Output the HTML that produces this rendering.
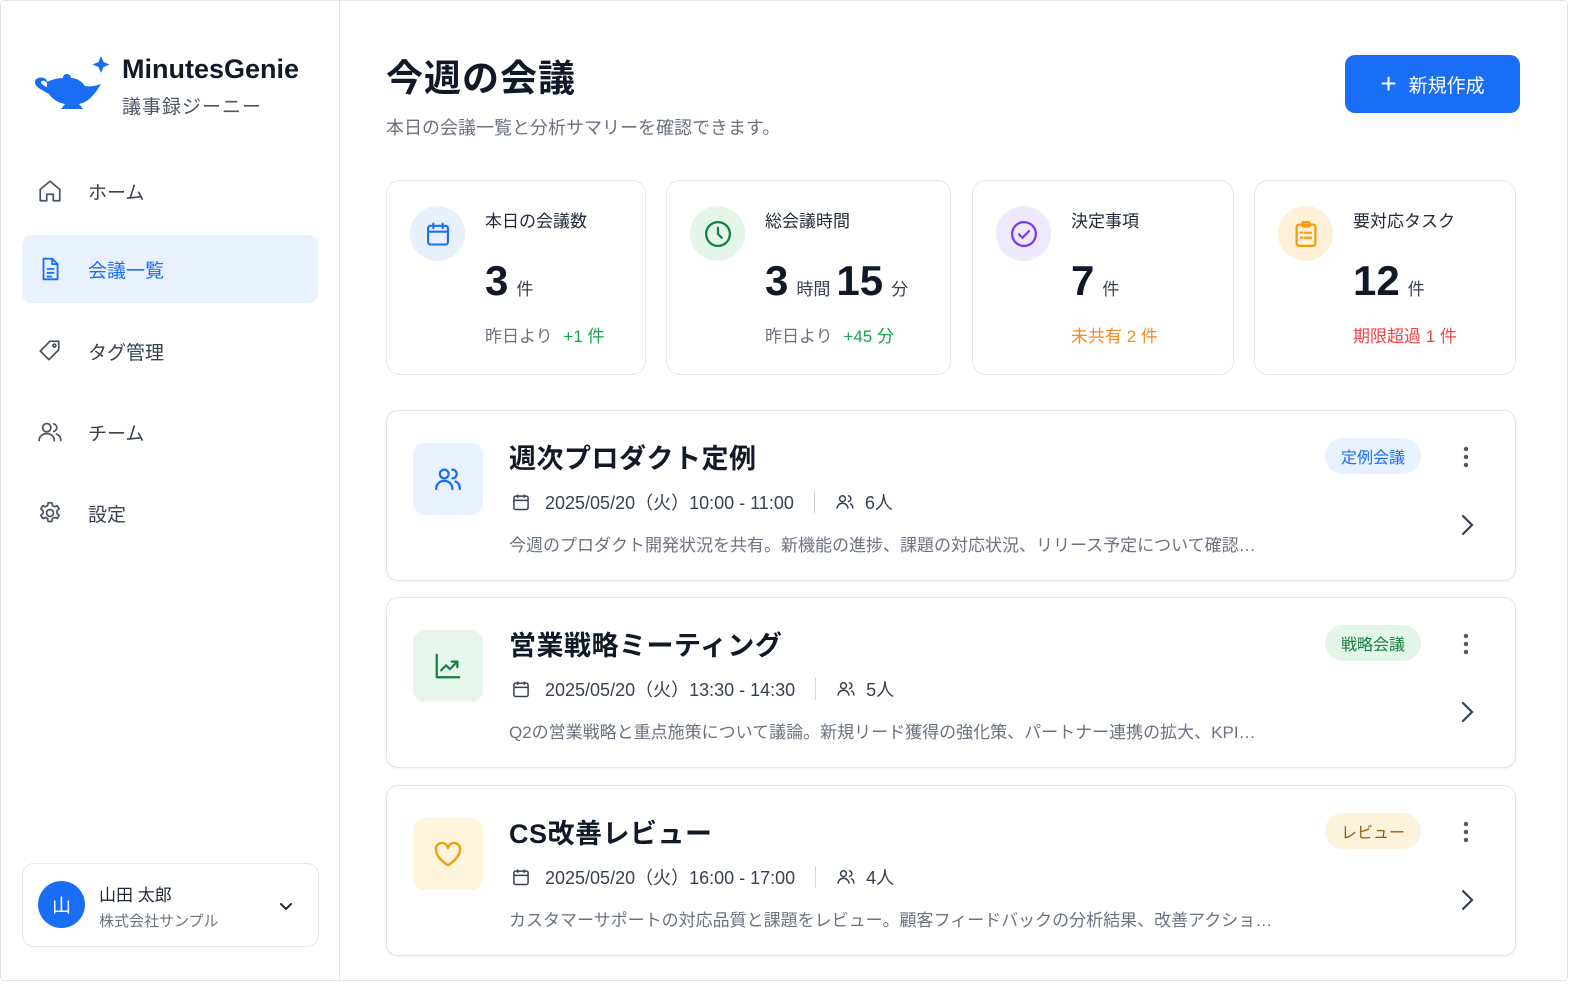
<!DOCTYPE html>
<html><head><meta charset="utf-8"><style>
*{box-sizing:border-box;margin:0;padding:0}
body{width:1586px;height:992px;background:#fff;font-family:"Liberation Sans","Noto Sans CJK JP",sans-serif;color:#1f2937;position:relative;overflow:hidden}
.frame{position:absolute;left:0;top:0;width:1568px;height:981px;border:1px solid #e3e5ea;border-radius:4px}
.side{position:absolute;left:0;top:0;width:340px;height:981px;border-right:1px solid #e5e7eb}
.abs{position:absolute}
.nav{position:absolute;left:22px;width:296px;height:68px;border-radius:10px;display:flex;align-items:center;font-size:19px;color:#374151}
.nav svg{position:absolute;left:15px}
.nav span{position:absolute;left:66px}
.card{position:absolute;top:180px;height:195px;border:1px solid #e5e7eb;border-radius:14px;background:#fff}
.ic{position:absolute;left:23px;top:25px;width:55px;height:55px;border-radius:50%;display:flex;align-items:center;justify-content:center}
.lab{position:absolute;left:98px;top:26px;font-size:17px;color:#1f2937}
.num{position:absolute;left:98px;top:76px;font-size:42px;font-weight:bold;color:#111827;white-space:nowrap}
.num small{font-size:17px;font-weight:normal;margin:0 6px 0 8px;color:#374151}
.sub{position:absolute;left:98px;top:141px;font-size:17px;color:#6b7280}
.item{position:absolute;left:386px;width:1130px;height:171px;border:1px solid #e2e4e9;border-radius:12px;box-shadow:0 1px 3px rgba(0,0,0,.06);background:#fff}
.sq{position:absolute;left:26px;top:32px;width:70px;height:72px;border-radius:12px;display:flex;align-items:center;justify-content:center}
.t{position:absolute;left:122px;top:26px;font-size:27px;font-weight:bold;color:#111827;letter-spacing:.5px}
.meta{position:absolute;left:124px;top:78px;font-size:18px;color:#374151;display:flex;align-items:center;white-space:nowrap}
.desc{position:absolute;left:122px;top:120px;font-size:17px;color:#6b7280;white-space:nowrap}
.tag{position:absolute;right:94px;top:27px;height:36px;padding:0 16px;border-radius:18px;font-size:16px;display:flex;align-items:center}
.dots{position:absolute;right:46px;top:35px}
.chev{position:absolute;right:40px;top:102px}
</style></head><body>
<div class="frame"></div>
<div class="side">
  <svg class="abs" style="left:33px;top:54px" width="78" height="58" viewBox="0 0 78 58">
    <path d="M68 2 l2.5 6 6 2.5 -6 2.5 -2.5 6 -2.5 -6 -6 -2.5 6 -2.5z" fill="#1a6ef5"/>
    <path d="M14 28 c0-6 -12-6 -12 0 c0 6 8 8 14 12 c4 6 10 9 16 10 l-4 5 h22 l-4 -5 c10 -2 16 -10 22 -20 c-6 2 -12 3 -16 2 c-4 -6 -10 -8 -14 -8 c0 -3 -3 -4 -4 -4 c-2 0 -4 1 -4 4 c-6 0 -12 2 -16 4 z M8 28 c1 -2 4 -2 6 1 l0 4 c-3 -1 -6 -3 -6 -5z" fill="#1a6ef5"/>
  </svg>
  <div class="abs" style="left:122px;top:54px;font-size:27px;font-weight:bold;color:#111827">MinutesGenie</div>
  <div class="abs" style="left:122px;top:92px;font-size:19px;color:#4b5563;letter-spacing:1px">議事録ジーニー</div>

  <div class="nav" style="top:157px"><svg width="26" height="26" viewBox="0 0 24 24" fill="none" stroke="#4b5563" stroke-width="1.6" stroke-linejoin="round"><path d="M3 10.5 12 3l9 7.5V21h-6v-6h-6v6H3z"/></svg><span>ホーム</span></div>
  <div class="nav" style="top:235px;background:#e9f1ff;color:#1a6ef5"><svg width="26" height="26" viewBox="0 0 24 24" fill="none" stroke="#1a6ef5" stroke-width="1.7" stroke-linejoin="round"><path d="M6 2.5h8l5 5V21.5H6z M14 2.5v5h5 M9 12h7 M9 15.5h7 M9 19h5"/></svg><span>会議一覧</span></div>
  <div class="nav" style="top:317px"><svg width="26" height="26" viewBox="0 0 24 24" fill="none" stroke="#4b5563" stroke-width="1.6" stroke-linejoin="round"><path d="M3 12 12 3h8v8l-9 9z"/><circle cx="16" cy="7" r="1.3"/></svg><span>タグ管理</span></div>
  <div class="nav" style="top:398px"><svg width="26" height="26" viewBox="0 0 24 24" fill="none" stroke="#4b5563" stroke-width="1.6" stroke-linecap="round"><circle cx="9" cy="8" r="3.8"/><path d="M2 20c0-4 3-6.5 7-6.5s7 2.5 7 6.5M15.5 4.5a3.6 3.6 0 0 1 0 7M18 14c2.5.8 4 3 4 6"/></svg><span>チーム</span></div>
  <div class="nav" style="top:479px"><svg width="26" height="26" viewBox="0 0 24 24" fill="none" stroke="#4b5563" stroke-width="1.6" stroke-linejoin="round"><circle cx="12" cy="12" r="3.2"/><path d="M10.3 2.5h3.4l.5 2.6 2 1.1 2.5-.9 1.7 2.9-2 1.8v2.3l2 1.8-1.7 2.9-2.5-.9-2 1.1-.5 2.6h-3.4l-.5-2.6-2-1.1-2.5.9-1.7-2.9 2-1.8v-2.3l-2-1.8 1.7-2.9 2.5.9 2-1.1z"/></svg><span>設定</span></div>

  <div class="abs" style="left:22px;top:863px;width:297px;height:84px;border:1px solid #e5e7eb;border-radius:12px">
    <div class="abs" style="left:15px;top:17px;width:47px;height:47px;border-radius:50%;background:#1a6ef5;color:#fff;font-size:19px;display:flex;align-items:center;justify-content:center">山</div>
    <div class="abs" style="left:76px;top:17px;font-size:17px;color:#1f2937">山田 太郎</div>
    <div class="abs" style="left:76px;top:46px;font-size:15px;color:#6b7280">株式会社サンプル</div>
    <svg class="abs" style="left:255px;top:34px" width="16" height="16" viewBox="0 0 16 16" fill="none" stroke="#1f2937" stroke-width="2" stroke-linecap="round"><path d="M3 6l5 5 5-5"/></svg>
  </div>
</div>

<div class="abs" style="left:386px;top:48px;font-size:37px;font-weight:bold;color:#111827;letter-spacing:1px">今週の会議</div>
<div class="abs" style="left:386px;top:114px;font-size:18px;color:#6b7280">本日の会議一覧と分析サマリーを確認できます。</div>
<div class="abs" style="left:1345px;top:55px;width:175px;height:58px;border-radius:10px;background:#1a6ef5;color:#fff;font-size:19px;display:flex;align-items:center;justify-content:center"><span style="font-size:28px;font-weight:300;margin-right:12px;line-height:1">+</span>新規作成</div>

<div class="card" style="left:386px;width:260px">
  <div class="ic" style="background:#e8f0fe"><svg width="28" height="28" viewBox="0 0 24 24" fill="none" stroke="#1a6ef5" stroke-width="1.8" stroke-linecap="round"><rect x="3.5" y="5" width="17" height="16" rx="2"/><path d="M3.5 10h17M8 3v4M16 3v4"/></svg></div>
  <div class="lab">本日の会議数</div>
  <div class="num">3<small>件</small></div>
  <div class="sub">昨日より <span style="color:#16a34a;margin-left:6px">+1 件</span></div>
</div>
<div class="card" style="left:666px;width:285px">
  <div class="ic" style="background:#e4f6ea"><svg width="30" height="30" viewBox="0 0 24 24" fill="none" stroke="#15803d" stroke-width="1.8" stroke-linecap="round"><circle cx="12" cy="12" r="9.5"/><path d="M12 7v5l3 3"/></svg></div>
  <div class="lab">総会議時間</div>
  <div class="num">3<small>時間</small>15<small>分</small></div>
  <div class="sub">昨日より <span style="color:#16a34a;margin-left:6px">+45 分</span></div>
</div>
<div class="card" style="left:972px;width:262px">
  <div class="ic" style="background:#efe9fd"><svg width="30" height="30" viewBox="0 0 24 24" fill="none" stroke="#7c3aed" stroke-width="1.8" stroke-linecap="round" stroke-linejoin="round"><circle cx="12" cy="12" r="9.5"/><path d="M8 12.3l2.7 2.7L16 9.7"/></svg></div>
  <div class="lab">決定事項</div>
  <div class="num">7<small>件</small></div>
  <div class="sub" style="color:#f5891f">未共有 2 件</div>
</div>
<div class="card" style="left:1254px;width:262px">
  <div class="ic" style="background:#fff1d9"><svg width="30" height="30" viewBox="0 0 24 24" fill="none" stroke="#f59e0b" stroke-width="1.8" stroke-linecap="round"><rect x="4.5" y="4.5" width="15" height="17" rx="2"/><rect x="9" y="2.5" width="6" height="3.5" rx="1"/><path d="M8 11h1M11 11h5M8 15h1M11 15h5"/></svg></div>
  <div class="lab">要対応タスク</div>
  <div class="num">12<small>件</small></div>
  <div class="sub" style="color:#ef4444">期限超過 1 件</div>
</div>

<!-- items -->
<div class="item" style="top:410px">
  <div class="sq" style="background:#eaf1fe"><svg width="30" height="30" viewBox="0 0 24 24" fill="none" stroke="#1a6ef5" stroke-width="1.8" stroke-linecap="round"><circle cx="9" cy="8" r="3.5"/><path d="M2.5 20c0-4 3-6.5 6.5-6.5s6.5 2.5 6.5 6.5M15.5 4.5a3.5 3.5 0 0 1 0 7M18 14c2.3.8 3.5 3 3.5 6"/></svg></div>
  <div class="t">週次プロダクト定例</div>
  <div class="meta"><svg width="20" height="20" viewBox="0 0 24 24" fill="none" stroke="#374151" stroke-width="1.8"><rect x="3.5" y="5" width="17" height="16" rx="2"/><path d="M3.5 10h17M8 3v4M16 3v4"/></svg><span style="margin-left:14px">2025/05/20（火）10:00 - 11:00</span><span style="width:1px;height:22px;background:#d1d5db;margin:0 20px"></span><svg width="20" height="20" viewBox="0 0 24 24" fill="none" stroke="#374151" stroke-width="1.8"><circle cx="9" cy="8" r="3.5"/><path d="M2.5 20c0-4 3-6.5 6.5-6.5s6.5 2.5 6.5 6.5M15.5 4.5a3.5 3.5 0 0 1 0 7M18 14c2.3.8 3.5 3 3.5 6"/></svg><span style="margin-left:10px">6人</span></div>
  <div class="desc">今週のプロダクト開発状況を共有。新機能の進捗、課題の対応状況、リリース予定について確認…</div>
  <div class="tag" style="background:#e8f1fe;color:#1a6ef5">定例会議</div>
  <svg class="dots" width="6" height="22" viewBox="0 0 6 22" fill="#4b5563"><circle cx="3" cy="3" r="2.2"/><circle cx="3" cy="11" r="2.2"/><circle cx="3" cy="19" r="2.2"/></svg>
  <svg class="chev" width="16" height="24" viewBox="0 0 16 24" fill="none" stroke="#374151" stroke-width="2.2" stroke-linecap="round"><path d="M4 3l9 9-9 9"/></svg>
</div>
<div class="item" style="top:597px">
  <div class="sq" style="background:#e6f6ec"><svg width="30" height="30" viewBox="0 0 24 24" fill="none" stroke="#15803d" stroke-width="1.8" stroke-linecap="round" stroke-linejoin="round"><path d="M3 3v18h18M6.5 15.5l4-4 3 3 6-6M15 8.5h4.5V13"/></svg></div>
  <div class="t">営業戦略ミーティング</div>
  <div class="meta"><svg width="20" height="20" viewBox="0 0 24 24" fill="none" stroke="#374151" stroke-width="1.8"><rect x="3.5" y="5" width="17" height="16" rx="2"/><path d="M3.5 10h17M8 3v4M16 3v4"/></svg><span style="margin-left:14px">2025/05/20（火）13:30 - 14:30</span><span style="width:1px;height:22px;background:#d1d5db;margin:0 20px"></span><svg width="20" height="20" viewBox="0 0 24 24" fill="none" stroke="#374151" stroke-width="1.8"><circle cx="9" cy="8" r="3.5"/><path d="M2.5 20c0-4 3-6.5 6.5-6.5s6.5 2.5 6.5 6.5M15.5 4.5a3.5 3.5 0 0 1 0 7M18 14c2.3.8 3.5 3 3.5 6"/></svg><span style="margin-left:10px">5人</span></div>
  <div class="desc">Q2の営業戦略と重点施策について議論。新規リード獲得の強化策、パートナー連携の拡大、KPI…</div>
  <div class="tag" style="background:#e4f6ea;color:#15803d">戦略会議</div>
  <svg class="dots" width="6" height="22" viewBox="0 0 6 22" fill="#4b5563"><circle cx="3" cy="3" r="2.2"/><circle cx="3" cy="11" r="2.2"/><circle cx="3" cy="19" r="2.2"/></svg>
  <svg class="chev" width="16" height="24" viewBox="0 0 16 24" fill="none" stroke="#374151" stroke-width="2.2" stroke-linecap="round"><path d="M4 3l9 9-9 9"/></svg>
</div>
<div class="item" style="top:785px">
  <div class="sq" style="background:#fff4dc"><svg width="32" height="32" viewBox="0 0 24 24" fill="none" stroke="#f59e0b" stroke-width="1.8" stroke-linejoin="round"><path d="M12 20.5S3 15 3 9a4.5 4.5 0 0 1 9-1.5A4.5 4.5 0 0 1 21 9c0 6-9 11.5-9 11.5z"/></svg></div>
  <div class="t">CS改善レビュー</div>
  <div class="meta"><svg width="20" height="20" viewBox="0 0 24 24" fill="none" stroke="#374151" stroke-width="1.8"><rect x="3.5" y="5" width="17" height="16" rx="2"/><path d="M3.5 10h17M8 3v4M16 3v4"/></svg><span style="margin-left:14px">2025/05/20（火）16:00 - 17:00</span><span style="width:1px;height:22px;background:#d1d5db;margin:0 20px"></span><svg width="20" height="20" viewBox="0 0 24 24" fill="none" stroke="#374151" stroke-width="1.8"><circle cx="9" cy="8" r="3.5"/><path d="M2.5 20c0-4 3-6.5 6.5-6.5s6.5 2.5 6.5 6.5M15.5 4.5a3.5 3.5 0 0 1 0 7M18 14c2.3.8 3.5 3 3.5 6"/></svg><span style="margin-left:10px">4人</span></div>
  <div class="desc">カスタマーサポートの対応品質と課題をレビュー。顧客フィードバックの分析結果、改善アクショ…</div>
  <div class="tag" style="background:#fdf3dc;color:#92600e">レビュー</div>
  <svg class="dots" width="6" height="22" viewBox="0 0 6 22" fill="#4b5563"><circle cx="3" cy="3" r="2.2"/><circle cx="3" cy="11" r="2.2"/><circle cx="3" cy="19" r="2.2"/></svg>
  <svg class="chev" width="16" height="24" viewBox="0 0 16 24" fill="none" stroke="#374151" stroke-width="2.2" stroke-linecap="round"><path d="M4 3l9 9-9 9"/></svg>
</div>
</body></html>
